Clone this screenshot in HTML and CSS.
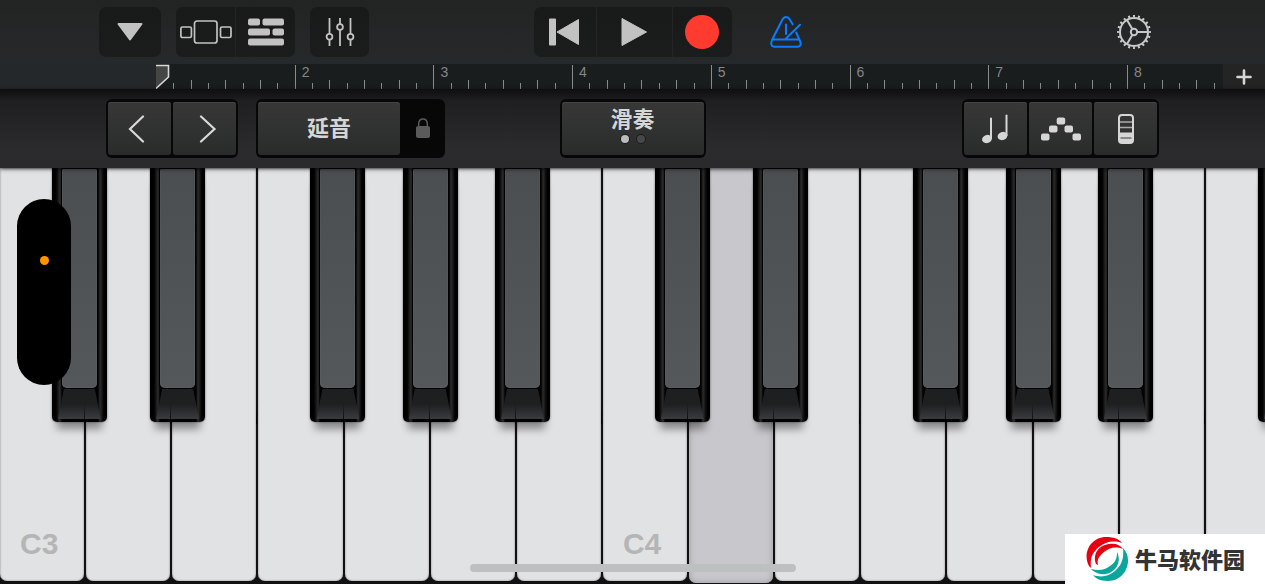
FILE: index.html
```html
<!DOCTYPE html>
<html lang="zh-CN">
<head>
    <meta charset="utf-8">
    <meta name="viewport" content="width=device-width, initial-scale=1">
    <title>Keyboard</title>
    <link rel="stylesheet" href="styles.css">
</head>
<body>
    <header class="toolbar">
        <div class="side">
            <div class="group">
                <button class="tool wide" aria-label="Menu">
                    <svg width="28" height="20" viewBox="0 0 28 20"><path d="M2.500 2H25.500L14 17.500Z" fill="#c2c2c2" stroke="#c2c2c2" stroke-width="2" stroke-linejoin="round"/></svg>
                </button>
            </div>
            <div class="group">
                <button class="tool" aria-label="Browser">
                    <svg width="52" height="24" viewBox="0 0 52 24" fill="none" stroke="#c2c2c2" stroke-width="1.700"><rect x="14.500" y="1" width="22.500" height="22" rx="2.500"/><rect x="0.900" y="7" width="10.500" height="10.500" rx="1.500"/><rect x="40.500" y="7" width="10.500" height="10.500" rx="1.500"/></svg>
                </button>
                <button class="tool" aria-label="Tracks">
                    <svg width="36" height="28" viewBox="0 0 36 28" fill="#c2c2c2"><rect y="0.500" width="12" height="7" rx="2"/><rect x="14.500" y="0.500" width="21.500" height="7" rx="2"/><rect y="10.500" width="22" height="7" rx="2"/><rect x="24.500" y="10.500" width="11.500" height="7" rx="2"/><rect y="20.500" width="36" height="7" rx="2"/></svg>
                </button>
            </div>
            <div class="group">
                <button class="tool" aria-label="Mixer">
                    <svg width="30" height="28" viewBox="0 0 30 28" fill="none" stroke="#c2c2c2" stroke-width="1.800"><path d="M4.500 0V15.500M4.500 22V28M15 0V6M15 12V28M25.500 0V15.500M25.500 22V28"/><circle cx="4.500" cy="18.700" r="2.900"/><circle cx="15" cy="9" r="2.900"/><circle cx="25.500" cy="18.700" r="2.900"/></svg>
                </button>
            </div>
        </div>
        <div class="group">
            <button class="tool wide" aria-label="Rewind">
                <svg width="34" height="28" viewBox="0 0 34 28" fill="#c2c2c2"><rect x="1" y="0.500" width="7" height="27" rx="1"/><path d="M30.500 1.500V26.500L9 14Z" stroke="#c2c2c2" stroke-linejoin="round"/></svg>
            </button>
            <button class="tool play" aria-label="Play">
                <svg width="28" height="30" viewBox="0 0 28 30"><path d="M2 1.500V28.500L26.500 15Z" fill="#c2c2c2" stroke="#c2c2c2" stroke-linejoin="round"/></svg>
            </button>
            <button class="tool" aria-label="Record"><span class="record"></span></button>
        </div>
        <div class="side right">
            <button class="plain" aria-label="Metronome">
                <svg width="32" height="32" viewBox="0 0 32 32" fill="none" stroke="#0a7cff" stroke-width="2" stroke-linecap="round" stroke-linejoin="round"><path d="M22.700 8.200L19.600 3.200Q16 -1 12.600 3.200L2 24Q-0.200 30 4 30.700H28Q32.200 30 30 25L26.200 16.500"/><path d="M3 23.500H29M16 8.500V18M30 8.700L15.500 23"/></svg>
            </button>
            <button class="plain" aria-label="Settings">
                <svg width="34" height="34" viewBox="0 0 34 34" fill="none" stroke="#c8c8c8" stroke-width="2"><circle cx="17" cy="17" r="14"/><circle cx="17" cy="17" r="15.700" stroke-width="2.500" pathLength="60" stroke-dasharray="1.200 1.800" stroke-dashoffset="0.600"/><circle cx="17" cy="17" r="3.200"/><path d="M20.500 17H31M15.300 14L10 4.900M15.300 20L10 29.100"/></svg>
            </button>
        </div>
    </header>

    <div class="ruler">
        <div class="timeline" id="timeline">
            <svg class="playhead" width="14" height="25" viewBox="0 0 14 25"><path d="M0 1.500H12.500V13L0 24.500" fill="#444646" stroke="#d8d8d8" stroke-width="1.600"/></svg>
        </div>
        <button class="add" aria-label="Add section">
            <svg width="16" height="16" viewBox="0 0 16 16"><path d="M8 1.500V14.500M1.500 8H14.500" stroke="#d6d6d6" stroke-width="2.600" stroke-linecap="round"/></svg>
        </button>
    </div>

    <section class="panel">
        <div class="side">
            <div class="frame">
                <button class="pad" aria-label="Octave down">
                    <svg width="26" height="28" viewBox="0 0 26 28"><path d="M16 1.500L3 14L16 26.500" fill="none" stroke="#d8d8d8" stroke-width="2.200" stroke-linecap="round"/></svg>
                </button>
                <button class="pad" aria-label="Octave up">
                    <svg width="26" height="28" viewBox="0 0 26 28"><path d="M9 1.500L22.500 14L9 26.500" fill="none" stroke="#d8d8d8" stroke-width="2.200" stroke-linecap="round"/></svg>
                </button>
            </div>
            <div class="frame sustain">
                <button class="pad long">延音</button>
                <button class="lock" aria-label="Lock">
                    <svg width="14" height="22" viewBox="0 0 14 22"><rect y="8" width="14" height="12" rx="2" fill="#5a5a5a"/><path d="M2.700 9V5.500Q3 1 7 1T11.300 5.500V9" fill="none" stroke="#5a5a5a" stroke-width="1.500"/></svg>
                </button>
            </div>
        </div>
        <div class="frame">
            <button class="pad long mode">
                滑奏
                <span class="dots"><span class="dot on"></span><span class="dot"></span></span>
            </button>
        </div>
        <div class="side right">
            <div class="frame">
                <button class="pad" aria-label="Scale">
                    <svg width="28" height="30" viewBox="0 0 28 30" fill="#d6d6d6"><ellipse cx="5" cy="25" rx="5" ry="4" transform="rotate(-20 5 25)"/><ellipse cx="20.500" cy="22" rx="5" ry="4" transform="rotate(-20 20.500 22)"/><path d="M8 4Q9 3 10 4V25H8ZM23.500 1Q24.500 0 25.500 1V22H23.500Z"/></svg>
                </button>
                <button class="pad" aria-label="Arpeggiator">
                    <svg width="40" height="24" viewBox="0 0 40 24" fill="#d6d6d6"><rect y="16.500" width="8.500" height="7" rx="2"/><rect x="8" y="8.500" width="8.500" height="7" rx="2"/><rect x="15.700" y="0.500" width="8.500" height="7" rx="2"/><rect x="23.500" y="8.500" width="8.500" height="7" rx="2"/><rect x="31.500" y="16.500" width="8.500" height="7" rx="2"/></svg>
                </button>
                <button class="pad" aria-label="Keyboard controls">
                    <svg width="16" height="30" viewBox="0 0 16 30"><rect x="1" y="1" width="14" height="28" rx="3" fill="none" stroke="#d6d6d6" stroke-width="2"/><path d="M2 8H14M2 13.500H14" stroke="#aaa" stroke-width="1.500"/><path d="M1 18.500H15V28H1Z" fill="#d6d6d6"/><path d="M2.500 24H13.500" stroke="#555" stroke-width="1.200"/></svg>
                </button>
            </div>
        </div>
    </section>

    <main class="keyboard" id="keyboard"></main>

    <div class="island"><span class="mic"></span></div>
    <div class="home"></div>
    <div class="brand">
        <svg width="46" height="46" viewBox="0 0 46 46">
            <path d="M5 30C-2 17 7 1 22 1C30 1 35 3 38 7C29 4 21 6 15 11C8 17 6 22 7 32Z" fill="#e60012"/>
            <path d="M12 28C8 17 16 9 25 8C32 7 36 9 39 13C31 10 25 12 20 16C14 21 13 24 14 29Z" fill="#e60012"/>
            <path d="M39 12C50 23 42 45 24 45C16 45 11 42 9 39C18 42 25 40 31 35C38 29 40 22 39 12Z" fill="#0aa59b"/>
            <path d="M33 16C38 26 32 36 22 38C15 39 10 36 7 33C15 35 21 34 26 30C32 26 33 22 33 16Z" fill="#0aa59b"/>
        </svg>
        <span>牛马软件园</span>
    </div>

    <script src="app.js"></script>
</body>
</html>
```

FILE: styles.css
```css
* {
    box-sizing: border-box;
}

body {
    margin: 0;
    min-height: 100vh;
    display: flex;
    flex-direction: column;
    overflow: hidden;
    position: relative;
    background: #111;
    font-family: "Liberation Sans", "Noto Sans CJK SC", sans-serif;
}

button {
    margin: 0;
    padding: 0;
    border: 0;
    background: none;
    color: inherit;
    font: inherit;
    cursor: pointer;
}

svg {
    display: block;
}

/* top toolbar */
.toolbar,
.panel {
    display: grid;
    grid-template-columns: 1fr auto 1fr;
}

.toolbar {
    height: 64px;
    padding-top: 7px;
    background: linear-gradient(#222423, #26292b);
}

.side {
    display: flex;
    gap: 15px;
    padding-left: 99px;
}

.group {
    display: flex;
    gap: 1px;
    height: 50px;
    border-radius: 7px;
    overflow: hidden;
    background: #232525;
}

.tool {
    width: 59px;
    display: flex;
    justify-content: center;
    align-items: center;
    background: linear-gradient(#181919, #1b1c1c);
}

.wide {
    width: 62px;
}

.play {
    width: 75px;
}

.record {
    width: 34px;
    height: 34px;
    border-radius: 50%;
    background: #ff3b30;
}

.toolbar .right {
    padding: 0 114px 7px 38px;
    justify-content: space-between;
    align-items: center;
}

/* ruler */
.ruler {
    display: flex;
    height: 25px;
    padding-left: 156px;
    background: #25282a;
}

.timeline {
    flex: 1;
    display: flex;
    overflow: hidden;
    position: relative;
    background: #1a1d1e;
}

.bar {
    flex: 0 0 13%;
    display: flex;
    align-items: flex-end;
    position: relative;
}

.tick {
    flex: 1;
    height: 6px;
    border-left: 1px solid #8a8c8c;
}

.tick:nth-child(odd) {
    height: 9px;
}

.tick:first-child {
    height: 24px;
}

.bar_number {
    position: absolute;
    left: 7px;
    top: 1px;
    font-size: 14px;
    line-height: 14px;
    color: #858787;
}

.playhead {
    position: absolute;
    left: 0;
    top: 0;
    z-index: 1;
}

.add {
    width: 42px;
    display: flex;
    justify-content: center;
    align-items: center;
    background: #232423;
}

/* control panel */
.panel {
    height: 79px;
    padding-top: 10px;
    position: relative;
    z-index: 1;
    background: linear-gradient(#0e0e0f, #1f1f21 12px, #2b2b2d 60px, #2a2a2c);
    box-shadow: 0 1px 4px rgba(0, 0, 0, .7);
}

.panel .side {
    gap: 18px;
    padding-left: 106px;
}

.panel .right {
    padding: 0 106px 0 0;
    justify-content: flex-end;
}

.frame {
    display: flex;
    gap: 2px;
    height: 59px;
    padding: 3px 2px;
    border-radius: 6px;
    background: #070707;
}

.pad {
    width: 63px;
    display: flex;
    justify-content: center;
    align-items: center;
    border-radius: 3px;
    background: linear-gradient(#373737, #2a2c2c);
    box-shadow: inset 0 1px 0 #444;
    color: #d6d6d6;
    font-size: 22px;
    line-height: 26px;
    font-weight: 700;
}

.long {
    width: 142px;
}

.sustain {
    gap: 0;
    padding-right: 0;
}

.lock {
    width: 45px;
    display: flex;
    justify-content: center;
    align-items: center;
}

.mode {
    flex-direction: column;
    padding-bottom: 8px;
}

.dots {
    display: flex;
    gap: 8px;
    margin-top: 2px;
}

.dot {
    width: 8px;
    height: 8px;
    border-radius: 50%;
    background: #484848;
    box-shadow: 0 0 0 1px #1c1c1c;
}

.on {
    background: #bbb;
}

/* keys */
.keyboard {
    flex: 1;
    display: flex;
    min-height: 416px;
    padding-bottom: 3px;
    overflow: hidden;
    background: #111;
}

.octave {
    flex: 0 0 47.66%;
    display: flex;
    position: relative;
}

.white {
    flex: 1;
    display: flex;
    align-items: flex-end;
    position: relative;
    margin-right: 2px;
    padding: 0 0 20px 20px;
    border-radius: 0 0 7px 7px;
    background: #e1e2e4;
    box-shadow: inset 0 0 2px #777;
    color: #b4b6b6;
    font-size: 30px;
    line-height: 34px;
    font-weight: 700;
}

.pressed {
    margin-bottom: -2px;
    background: #c8c7cc;
    box-shadow: inset 0 0 6px #99989c;
}

/* seam between two white keys, seen on the front of the black one */
.white::after {
    content: "";
    position: absolute;
    z-index: 1;
    left: 100%;
    top: 57%;
    width: 1px;
    height: 5%;
    background: linear-gradient(transparent, #000);
}

.black {
    position: absolute;
    top: 0;
    width: 55px;
    height: 254px;
    border-radius: 0 0 5px 5px;
    background: linear-gradient(90deg, #000 4px, #2c2c2c 8px, #000 10px, #000 46px, #2c2c2c 48px, #000 52px);
    box-shadow: 0 0 2px rgba(0, 0, 0, .6), 0 12px 8px -5px rgba(0, 0, 0, .4);
}

.black:nth-of-type(8) {
    left: 8.6%;
}

.black:nth-of-type(9) {
    left: 24.9%;
}

.black:nth-of-type(10) {
    left: 51.5%;
}

.black:nth-of-type(11) {
    left: 66.8%;
}

.black:nth-of-type(12) {
    left: 82.1%;
}

.black::before {
    content: "";
    position: absolute;
    left: 10px;
    right: 10px;
    top: 1px;
    height: 219px;
    border-radius: 2px 2px 5px 5px;
    background: linear-gradient(#4b4e50, #54585a);
    box-shadow: inset 0 0 1px #888, 0 0 0 1px #000;
}

/* sloped front face */
.black::after {
    content: "";
    position: absolute;
    left: 6px;
    right: 6px;
    bottom: 3px;
    height: 30px;
    clip-path: polygon(14% 0, 86% 0, 100% 100%, 0 100%);
    background: linear-gradient(#1e1f21 50%, #3a3b3e);
}

/* overlays */
.island {
    position: absolute;
    left: 17px;
    top: 199px;
    width: 54px;
    height: 186px;
    padding-top: 57px;
    z-index: 2;
    border-radius: 27px;
    background: #000;
}

.mic {
    display: block;
    width: 9px;
    height: 9px;
    margin: 0 auto;
    border-radius: 50%;
    background: #ff9500;
}

.home {
    position: absolute;
    left: 50%;
    bottom: 12px;
    width: 326px;
    height: 8px;
    margin-left: -163px;
    border-radius: 4px;
    background: #bebfc1;
    z-index: 2;
}

.brand {
    position: absolute;
    right: 0;
    bottom: 0;
    width: 200px;
    height: 50px;
    display: flex;
    align-items: center;
    gap: 5px;
    padding-left: 19px;
    z-index: 2;
    background: #fff;
    color: #333;
    font-family: "Noto Sans CJK SC", sans-serif;
    font-size: 22px;
    line-height: 32px;
    font-weight: 900;
}

.brand span {
    padding-bottom: 3px;
}
```

FILE: app.js
```js
const timeline = document.getElementById('timeline');
const keyboard = document.getElementById('keyboard');

function add(parent, tag, className, text) {
    const el = document.createElement(tag);
    el.className = className;
    if (text) el.textContent = text;
    parent.appendChild(el);
    return el;
}

for (let n = 1; n <= 8; n++) {
    const bar = add(timeline, 'div', 'bar');
    for (let i = 0; i < 8; i++) {
        add(bar, 'span', 'tick');
    }
    if (n > 1) add(bar, 'div', 'bar_number', String(n));
}

for (let n = 3; n <= 5; n++) {
    const octave = add(keyboard, 'div', 'octave');
    for (const note of 'CDEFGAB') {
        const key = add(octave, 'button', 'white', note === 'C' ? note + n : '');
        key.setAttribute('aria-label', note + n);
    }
    for (const note of ['C#', 'D#', 'F#', 'G#', 'A#']) {
        add(octave, 'button', 'black').setAttribute('aria-label', note + n);
    }
}

keyboard.children[1].children[1].classList.add('pressed');
```
